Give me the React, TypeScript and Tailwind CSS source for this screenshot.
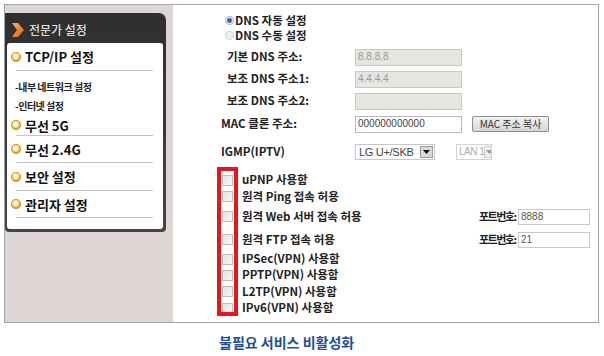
import React from "react";

const F = { fontFamily: '"Noto Sans CJK KR", "Noto Sans", sans-serif' };

function Bullet() {
  return (
    <svg width="10" height="10" viewBox="0 0 10 10" className="shrink-0">
      <defs>
        <radialGradient id="bg1" cx="45%" cy="40%" r="60%">
          <stop offset="0%" stopColor="#fffbe6" />
          <stop offset="45%" stopColor="#ffe9a0" />
          <stop offset="100%" stopColor="#d9900e" />
        </radialGradient>
      </defs>
      <circle cx="5" cy="5" r="4.6" fill="url(#bg1)" stroke="#c47d0a" strokeWidth="0.8" />
      <circle cx="5" cy="5" r="2" fill="#fff8dc" />
    </svg>
  );
}

function MenuItem({ label, h, bold }: { label: string; h: string; bold?: boolean }) {
  return (
    <div className={`flex items-center gap-[4px] pl-[4px] ${h}`}>
      <Bullet />
      <span className={`text-[13px] leading-none text-[#111] ${bold ? "font-bold" : "font-semibold"}`}>{label}</span>
    </div>
  );
}

function Sep() {
  return <div className="ml-[9px] mr-[10px] h-[1px] bg-[#c4c4c4]" />;
}

function Radio({ on }: { on?: boolean }) {
  return (
    <svg width="9" height="9" viewBox="0 0 9 9" className="shrink-0">
      <circle cx="4.5" cy="4.5" r="4.2" fill={on ? "#dfe6ee" : "#efefef"} stroke={on ? "#8aa0b8" : "#c8c8c8"} strokeWidth="0.7" />
      {on && <circle cx="4.5" cy="4.5" r="2.4" fill="#3f5f86" />}
    </svg>
  );
}

function DnsRow({ label, value }: { label: string; value: string }) {
  return (
    <div className="flex h-[22px] items-center">
      <div className="w-[134px] whitespace-nowrap pl-[6px] text-[11.5px] font-semibold leading-none text-[#222]">{label}</div>
      <div className="flex h-[17px] w-[107px] items-center border border-[#c9c9c4] bg-[#e7e5df] pl-[2px] text-[10px] leading-none text-[#9a9a9a]" style={{ fontFamily: '"Liberation Sans", sans-serif' }}>
        {value}
      </div>
    </div>
  );
}

function Check() {
  return <div className="h-[11px] w-[11px] shrink-0 border border-[#bdbdbd] bg-gradient-to-br from-[#e3e3e3] to-[#f7f7f7]" />;
}

function CheckRow({ label, h, port }: { label: string; h: string; port?: string }) {
  return (
    <div className={`flex items-center ${h}`}>
      <div className="pl-[1px]">
        <Check />
      </div>
      <div className="ml-[9px] w-[237px] whitespace-nowrap text-[11.5px] font-semibold leading-none text-[#222]">{label}</div>
      {port !== undefined && (
        <>
          <div className="w-[39px] whitespace-nowrap text-[11px] font-bold leading-none tracking-[-1.5px] text-[#222]">포트번호:</div>
          <div className="flex h-[16px] w-[72px] items-center border border-[#c8c8c8] bg-white pl-[2px] text-[10px] leading-none text-[#555]" style={{ fontFamily: '"Liberation Sans", sans-serif' }}>
            {port}
          </div>
        </>
      )}
    </div>
  );
}

export default function App() {
  return (
    <div className="h-[356px] w-[604px] overflow-hidden bg-white" style={F}>
      <div className="ml-[4px] mt-[4px] flex h-[319px] w-[595px] border border-[#a3a3a3]">
        {/* Sidebar */}
        <div className="w-[168px] bg-[#ddd6d4] pt-[8px]">
          <div className="w-[161px] rounded-tr-[7px] rounded-b-[4px] bg-gradient-to-b from-[#2f2f2f] to-[#454545] pb-[3px] pl-[2px] pr-[3px]">
            <div className="flex h-[30px] items-center gap-[5px] pl-[5px] pt-[4px]">
              <svg width="12" height="14" viewBox="0 0 12 14">
                <defs>
                  <linearGradient id="chev" x1="0" y1="0" x2="1" y2="1">
                    <stop offset="0%" stopColor="#ffb066" />
                    <stop offset="100%" stopColor="#e0600e" />
                  </linearGradient>
                </defs>
                <polygon points="0,0 6,0 12,7 6,14 0,14 5,7" fill="url(#chev)" />
              </svg>
              <span className="text-[12px] leading-none text-white">전문가 설정</span>
            </div>
            <div className="rounded-[3px] bg-white pb-[11px]">
              <MenuItem label="TCP/IP 설정" h="h-[27px]" bold />
              <Sep />
              <div className="pt-[6px] pl-[8px] text-[10px] font-semibold leading-none tracking-[-0.5px] text-[#222]">
                <div className="flex h-[19px] items-center">-내부 네트워크 설정</div>
                <div className="flex h-[19px] items-center">-인터넷 설정</div>
              </div>
              <MenuItem label="무선 5G" h="h-[20px]" />
              <Sep />
              <MenuItem label="무선 2.4G" h="h-[26px]" />
              <Sep />
              <MenuItem label="보안 설정" h="h-[27px]" />
              <Sep />
              <MenuItem label="관리자 설정" h="h-[26px]" />
              <Sep />
            </div>
          </div>
        </div>

        {/* Content */}
        <div className="relative flex-1 bg-white pl-[48px] pt-[8px]">
          <div className="flex h-[15px] items-center gap-[1px] pl-[4px] text-[11.5px] font-semibold leading-none text-[#222]">
            <Radio on />
            <span>DNS 자동 설정</span>
          </div>
          <div className="flex h-[15px] items-center gap-[1px] pl-[4px] text-[11.5px] font-semibold leading-none text-[#222]">
            <Radio />
            <span>DNS 수동 설정</span>
          </div>
          <div className="mt-[3px]">
            <DnsRow label="기본 DNS 주소:" value="8.8.8.8" />
            <DnsRow label="보조 DNS 주소1:" value="4.4.4.4" />
            <DnsRow label="보조 DNS 주소2:" value="" />
          </div>
          <div className="mt-[1px] flex h-[22px] items-center">
            <div className="w-[134px] whitespace-nowrap text-[11.5px] font-semibold leading-none text-[#222]">MAC 클론 주소:</div>
            <div className="flex h-[17px] w-[107px] items-center border border-[#b9b9b9] bg-white pl-[2px] text-[10px] leading-none text-[#444]" style={{ fontFamily: '"Liberation Sans", sans-serif' }}>
              000000000000
            </div>
            <div className="ml-[10px] flex h-[16px] w-[77px] items-center justify-center whitespace-nowrap rounded-[2px] border border-[#8c8c8c] bg-gradient-to-b from-[#f2f2f2] to-[#d6d6d6] text-[10px] leading-none text-[#333]">
              MAC 주소 복사
            </div>
          </div>
          <div className="mt-[6px] flex h-[22px] items-center">
            <div className="w-[134px] whitespace-nowrap text-[11.5px] font-semibold leading-none text-[#222]">IGMP(IPTV)</div>
            <div className="flex h-[16px] w-[80px] items-center border border-[#c8c8c8] bg-white">
              <span className="flex-1 whitespace-nowrap pl-[3px] text-[11px] leading-none tracking-[-0.3px] text-[#444]" style={{ fontFamily: '"Liberation Sans", sans-serif' }}>LG U+/SKB</span>
              <div className="mr-[1px] flex h-[12px] w-[13px] shrink-0 items-center justify-center border border-[#999] bg-[#d8d8d8]">
                <svg width="7" height="4" viewBox="0 0 7 4"><polygon points="0,0 7,0 3.5,4" fill="#111" /></svg>
              </div>
            </div>
            <div className="ml-[21px] flex h-[16px] w-[36px] items-center overflow-hidden border border-[#d2d2d2] bg-white">
              <span className="flex-1 whitespace-nowrap pl-[2px] text-[10px] leading-none tracking-[-0.5px] text-[#aaa]" style={{ fontFamily: '"Liberation Sans", sans-serif' }}>LAN 1</span>
              <div className="mr-[1px] flex h-[12px] w-[11px] shrink-0 items-center justify-center border border-[#ccc] bg-[#eee]">
                <svg width="7" height="4" viewBox="0 0 7 4"><polygon points="0,0 7,0 3.5,4" fill="#999" /></svg>
              </div>
            </div>
          </div>
          <div className="mt-[9px]">
            <CheckRow label="uPNP 사용함" h="h-[16px]" />
            <CheckRow label="원격 Ping 접속 허용" h="h-[17px]" />
            <CheckRow label="원격 Web 서버 접속 허용" h="h-[23px]" port="8888" />
            <CheckRow label="원격 FTP 접속 허용" h="h-[23px]" port="21" />
            <CheckRow label="IPSec(VPN) 사용함" h="h-[16px]" />
            <CheckRow label="PPTP(VPN) 사용함" h="h-[16px]" />
            <CheckRow label="L2TP(VPN) 사용함" h="h-[17px]" />
            <CheckRow label="IPv6(VPN) 사용함" h="h-[16px]" />
          </div>
          <div className="absolute left-[44px] top-[162px] h-[149px] w-[21px] border-[4px] border-[#e8141b]" />
        </div>
      </div>
      <div className="mt-[9px] pl-[219px] text-[14px] font-bold leading-[20px] text-[#1d4f98]">불필요 서비스 비활성화</div>
    </div>
  );
}
